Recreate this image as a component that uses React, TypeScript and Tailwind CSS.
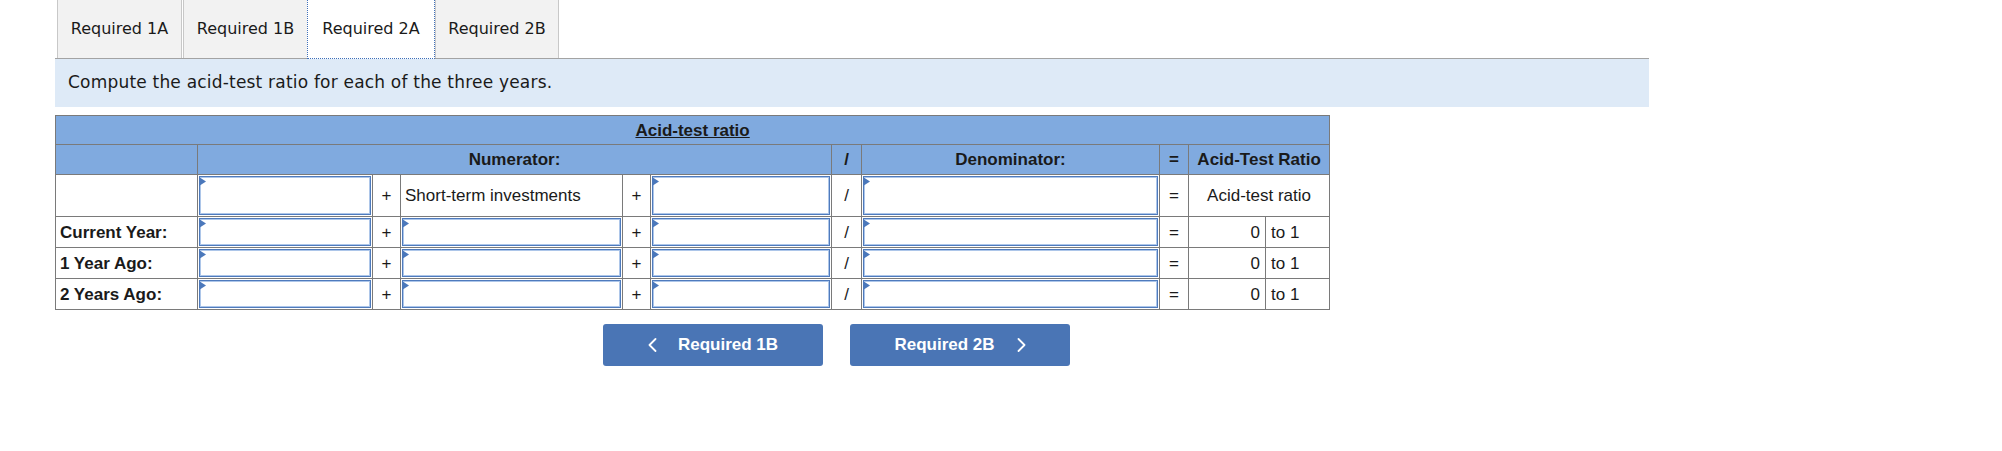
const tabs = [
  { label: 'Required 1A', active: false },
  { label: 'Required 1B', active: false },
  { label: 'Required 2A', active: true },
  { label: 'Required 2B', active: false },
];

const rows = ['Current Year:', '1 Year Ago:', '2 Years Ago:'];

function Marker() {
  return (
    <svg className="absolute left-0 top-[1px]" width="7" height="9" viewBox="0 0 7 9">
      <path d="M0 0 L7 4.5 L0 9 Z" fill="#4b78bb" />
    </svg>
  );
}

function Field({ tall }: { tall?: boolean }) {
  return (
    <div className="relative">
      <input
        type="text"
        aria-label="answer"
        className={
          tall
            ? 'block w-full h-[39px] bg-white border border-[#4f7bbd] shadow-[inset_0_0_0_1px_#adc6e9] outline-none'
            : 'block w-full h-[28px] bg-white border border-[#4f7bbd] shadow-[inset_0_0_0_1px_#adc6e9] outline-none'
        }
      />
      <Marker />
    </div>
  );
}

function Chevron({ dir }: { dir: 'left' | 'right' }) {
  return (
    <svg width="9" height="14" viewBox="0 0 9 14" fill="none">
      <polyline
        points={dir === 'left' ? '7.5,1 1.5,7 7.5,13' : '1.5,1 7.5,7 1.5,13'}
        stroke="white"
        strokeWidth="1.8"
        strokeLinecap="round"
        strokeLinejoin="round"
      />
    </svg>
  );
}

export default function App() {
  const cell = 'border border-[#7a7a7a]';
  const head = 'border border-[#7a7a7a] bg-[#80aadf] font-bold text-center';

  return (
    <div className="w-[2002px] h-[451px] bg-white pl-[55px] text-[#1a1a1a]">
      {/* tabs */}
      <div className="flex h-[58px] pl-[2px] font-['DejaVu_Sans',Verdana,sans-serif] text-[16px]">
        {tabs.map((t, i) =>
          t.active ? (
            <div
              key={t.label}
              className="relative z-10 h-[59px] w-[128px] bg-white border border-t-0 border-dotted border-[#3f6fba] flex items-center justify-center"
            >
              {t.label}
            </div>
          ) : (
            <div
              key={t.label}
              className={
                i === 0
                  ? 'h-full w-[125px] bg-[#f2f2f2] border-x border-[#c8c8c8] flex items-center justify-center'
                  : i === 1
                    ? 'ml-[1px] h-full w-[124px] bg-[#f2f2f2] border-l border-[#c8c8c8] flex items-center justify-center'
                    : 'h-full w-[124px] bg-[#f2f2f2] border-x border-[#c8c8c8] flex items-center justify-center'
              }
            >
              {t.label}
            </div>
          )
        )}
      </div>

      {/* instruction */}
      <div className="w-[1594px] h-[49px] bg-[#deeaf7] border-t border-[#a3a3a3] flex items-center pl-[13px] font-['DejaVu_Sans',Verdana,sans-serif] text-[17px] tracking-[0.2px]">
        Compute the acid-test ratio for each of the three years.
      </div>

      {/* ratio table */}
      <table className="mt-[8px] w-[1274px] table-fixed border-collapse font-['Liberation_Sans',Arial,sans-serif] text-[17px] leading-none">
        <colgroup>
          <col className="w-[142px]" />
          <col className="w-[175px]" />
          <col className="w-[28px]" />
          <col className="w-[222px]" />
          <col className="w-[28px]" />
          <col className="w-[181px]" />
          <col className="w-[30px]" />
          <col className="w-[298px]" />
          <col className="w-[29px]" />
          <col className="w-[77px]" />
          <col className="w-[64px]" />
        </colgroup>
        <tbody>
          <tr className="h-[29px]">
            <th colSpan={11} className={head}>
              <span className="underline">Acid-test ratio</span>
            </th>
          </tr>
          <tr className="h-[30px]">
            <th className={head}></th>
            <th colSpan={5} className={head}>Numerator:</th>
            <th className={head}>/</th>
            <th className={head}>Denominator:</th>
            <th className={head}>=</th>
            <th colSpan={2} className={head}>Acid-Test Ratio</th>
          </tr>
          <tr>
            <td className={cell}></td>
            <td className={`${cell} p-px`}><Field tall /></td>
            <td className={`${cell} text-center`}>+</td>
            <td className={`${cell} pl-[4px]`}>Short-term investments</td>
            <td className={`${cell} text-center`}>+</td>
            <td className={`${cell} p-px`}><Field tall /></td>
            <td className={`${cell} text-center`}>/</td>
            <td className={`${cell} p-px`}><Field tall /></td>
            <td className={`${cell} text-center`}>=</td>
            <td colSpan={2} className={`${cell} text-center`}>Acid-test ratio</td>
          </tr>
          {rows.map((label) => (
            <tr key={label}>
              <td className={`${cell} pl-[4px] font-bold`}>{label}</td>
              <td className={`${cell} p-px`}><Field /></td>
              <td className={`${cell} text-center`}>+</td>
              <td className={`${cell} p-px`}><Field /></td>
              <td className={`${cell} text-center`}>+</td>
              <td className={`${cell} p-px`}><Field /></td>
              <td className={`${cell} text-center`}>/</td>
              <td className={`${cell} p-px`}><Field /></td>
              <td className={`${cell} text-center`}>=</td>
              <td className={`${cell} text-right pr-[5px]`}>0</td>
              <td className={`${cell} pl-[5px]`}>to 1</td>
            </tr>
          ))}
        </tbody>
      </table>

      {/* navigation */}
      <div className="mt-[14px] ml-[548px] flex gap-[27px] font-['Liberation_Sans',Arial,sans-serif] text-[17px] font-bold text-white">
        <button className="w-[220px] h-[42px] rounded-[3px] bg-[#4a75b5] flex items-center justify-center gap-[21px]">
          <Chevron dir="left" />
          Required 1B
        </button>
        <button className="w-[220px] h-[42px] rounded-[3px] bg-[#4a75b5] flex items-center justify-center gap-[22px]">
          Required 2B
          <Chevron dir="right" />
        </button>
      </div>
    </div>
  );
}
